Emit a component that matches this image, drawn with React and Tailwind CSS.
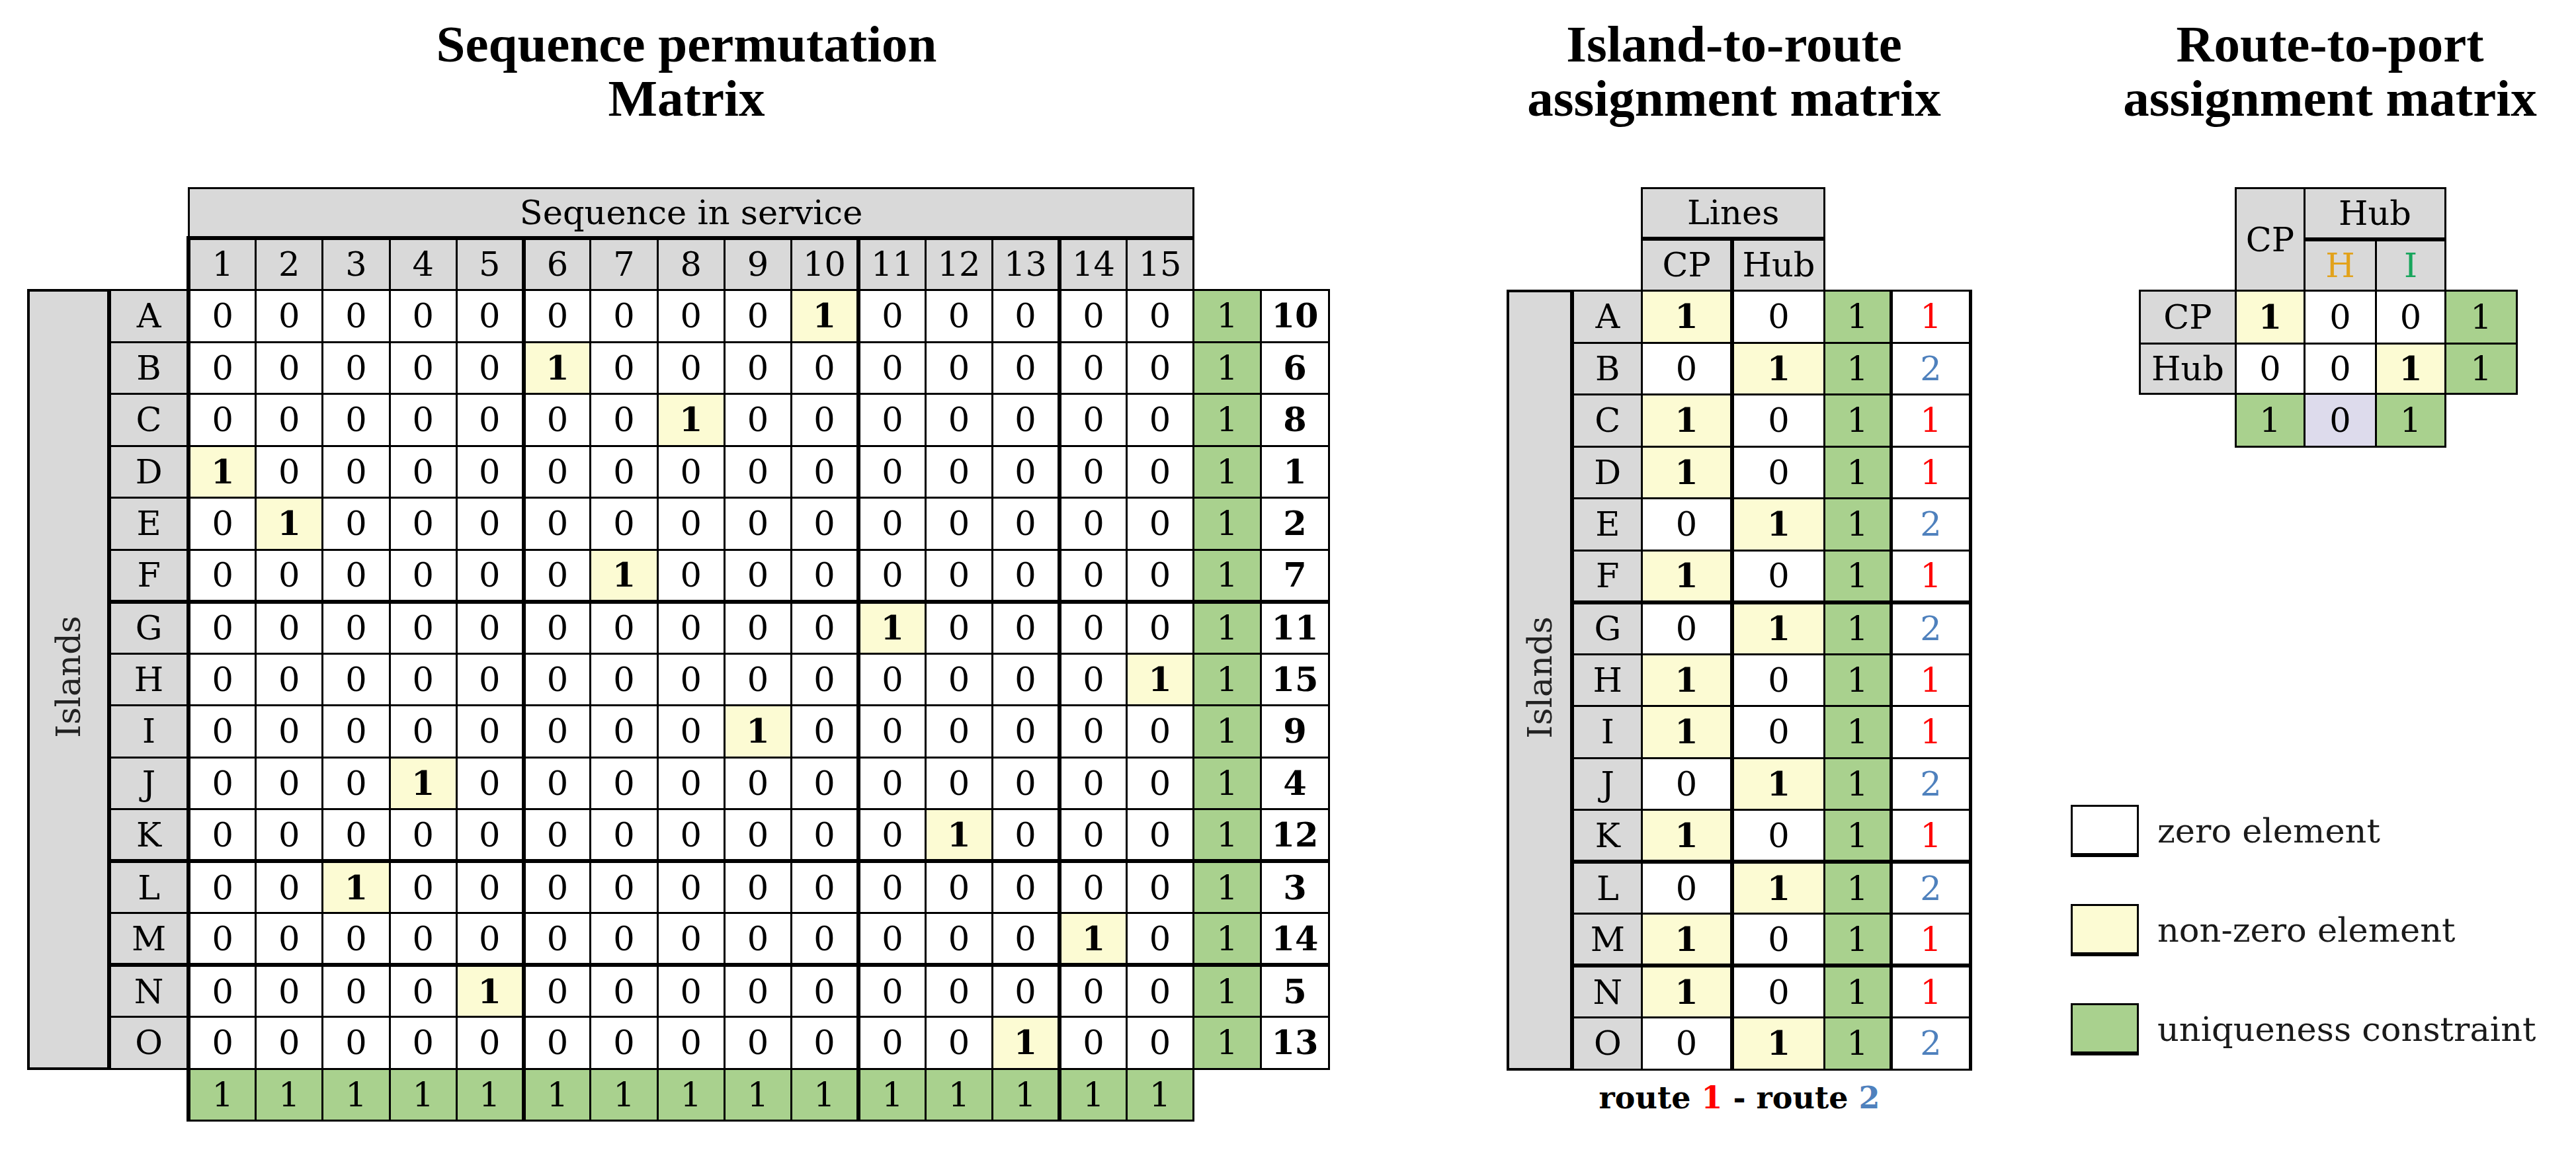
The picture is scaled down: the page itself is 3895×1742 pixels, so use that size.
import React from 'react';

// fonts: cells in a book serif, titles in a Times-width bold serif
const serif = "font-['DejaVu_Serif','Liberation_Serif',serif]";
const titleFont = "font-['Liberation_Serif','Times_New_Roman',serif]";

const LETTERS = 'ABCDEFGHIJKLMNO'.split('');
// column of the single 1 in each island row (also the right-hand number)
const SEQ = [10, 6, 8, 1, 2, 7, 11, 15, 9, 4, 12, 3, 14, 5, 13];
// island-to-route: 1 = CP line, 0 = Hub line
const CP_LINE = [1, 0, 1, 1, 0, 1, 0, 1, 1, 0, 1, 0, 1, 1, 0];
const COLS = Array.from({ length: 15 }, (_, i) => i + 1);
const THICK_COLS = [5, 10, 13];
const THICK_ROWS = [5, 10, 12];

const GRAY = 'bg-[#d9d9d9]';
const YELLOW = 'bg-[#fcfbd3]';
const GREEN = 'bg-[#a9d18e]';

function Title({ lines, className = '' }) {
  return (
    <div className={`${titleFont} text-[79px] leading-[82px] font-bold text-center whitespace-nowrap text-black ${className}`}>
      {lines.map(l => <div key={l}>{l}</div>)}
    </div>
  );
}

function Islands() {
  return (
    <span className="inline-block [writing-mode:vertical-rl] rotate-180 text-[#222]">Islands</span>
  );
}

function SeqMatrix() {
  const colEdge = c => `${c === 1 ? 'border-l-[6px]' : ''} ${THICK_COLS.includes(c) ? 'border-r-[6px]' : ''}`;
  return (
    <table className={`table-fixed border-collapse ${serif} text-[51px] leading-none text-black`}>
      <colgroup>
        <col className="w-[122px]" />
        <col className="w-[121px]" />
        {COLS.map(c => <col key={c} className="w-[101.5px]" />)}
        <col className="w-[102px]" />
        <col className="w-[103px]" />
      </colgroup>
      <tbody>
        <tr className="h-[75px]">
          <td colSpan={2} />
          <td colSpan={15} className={`border-[3px] border-b-[6px] border-black ${GRAY} text-center`}>Sequence in service</td>
          <td colSpan={2} />
        </tr>
        <tr className="h-[79px]">
          <td colSpan={2} />
          {COLS.map(c => (
            <td key={c} className={`border-[3px] border-black ${GRAY} text-center ${colEdge(c)}`}>{c}</td>
          ))}
          <td colSpan={2} />
        </tr>
        {LETTERS.map((L, r) => {
          const rb = THICK_ROWS.includes(r) ? 'border-b-[6px]' : '';
          return (
            <tr key={L} className="h-[78.5px]">
              {r === 0 && (
                <td rowSpan={15} className={`border-[4px] border-r-[6px] border-black ${GRAY} text-center`}>
                  <Islands />
                </td>
              )}
              <td className={`border-[3px] border-l-[6px] border-black ${GRAY} text-center ${rb}`}>{L}</td>
              {COLS.map(c => {
                const one = SEQ[r] === c;
                return (
                  <td key={c} className={`border-[3px] border-black text-center ${one ? `${YELLOW} font-bold` : 'bg-white'} ${colEdge(c)} ${rb}`}>
                    {one ? 1 : 0}
                  </td>
                );
              })}
              <td className={`border-[3px] border-black ${GREEN} text-center ${rb}`}>1</td>
              <td className={`border-[3px] border-black bg-white text-center font-bold ${rb}`}>{SEQ[r]}</td>
            </tr>
          );
        })}
        <tr className="h-[78px]">
          <td colSpan={2} />
          {COLS.map(c => (
            <td key={c} className={`border-[3px] border-black ${GREEN} text-center ${colEdge(c)}`}>1</td>
          ))}
          <td colSpan={2} />
        </tr>
      </tbody>
    </table>
  );
}

function RouteMatrix() {
  return (
    <table className={`table-fixed border-collapse ${serif} text-[51px] leading-none text-black`}>
      <colgroup>
        <col className="w-[98px]" />
        <col className="w-[106px]" />
        <col className="w-[137px]" />
        <col className="w-[140px]" />
        <col className="w-[102px]" />
        <col className="w-[121px]" />
      </colgroup>
      <tbody>
        <tr className="h-[76px]">
          <td colSpan={2} />
          <td colSpan={2} className={`border-[3px] border-b-[6px] border-black ${GRAY} text-center`}>Lines</td>
          <td colSpan={2} />
        </tr>
        <tr className="h-[79px]">
          <td colSpan={2} />
          <td className={`border-[3px] border-r-[6px] border-black ${GRAY} text-center`}>CP</td>
          <td className={`border-[3px] border-black ${GRAY} text-center`}>Hub</td>
          <td colSpan={2} />
        </tr>
        {LETTERS.map((L, r) => {
          const rb = THICK_ROWS.includes(r) ? 'border-b-[6px]' : '';
          const cp = CP_LINE[r] === 1;
          return (
            <tr key={L} className="h-[78.5px]">
              {r === 0 && (
                <td rowSpan={15} className={`border-[4px] border-r-[6px] border-black ${GRAY} text-center`}>
                  <Islands />
                </td>
              )}
              <td className={`border-[3px] border-black ${GRAY} text-center ${rb}`}>{L}</td>
              <td className={`border-[3px] border-r-[6px] border-black text-center ${cp ? `${YELLOW} font-bold` : 'bg-white'} ${rb}`}>{cp ? 1 : 0}</td>
              <td className={`border-[3px] border-black text-center ${cp ? 'bg-white' : `${YELLOW} font-bold`} ${rb}`}>{cp ? 0 : 1}</td>
              <td className={`border-[3px] border-r-[5px] border-black ${GREEN} text-center ${rb}`}>1</td>
              <td className={`border-[3px] border-r-[5px] border-black bg-white text-center ${rb} ${cp ? 'text-[#ff0000]' : 'text-[#4f81bd]'}`}>{cp ? 1 : 2}</td>
            </tr>
          );
        })}
      </tbody>
    </table>
  );
}

function PortMatrix() {
  return (
    <table className={`table-fixed border-collapse ${serif} text-[51px] leading-none text-black`}>
      <colgroup>
        <col className="w-[145px]" />
        <col className="w-[104px]" />
        <col className="w-[108px]" />
        <col className="w-[105px]" />
        <col className="w-[108px]" />
      </colgroup>
      <tbody>
        <tr className="h-[77px]">
          <td />
          <td rowSpan={2} className={`border-[3px] border-black ${GRAY} text-center`}>CP</td>
          <td colSpan={2} className={`border-[3px] border-b-[6px] border-black ${GRAY} text-center`}>Hub</td>
          <td />
        </tr>
        <tr className="h-[78px]">
          <td />
          <td className={`border-[3px] border-black ${GRAY} text-center text-[#e2a21b]`}>H</td>
          <td className={`border-[3px] border-black ${GRAY} text-center text-[#18a55c]`}>I</td>
          <td />
        </tr>
        <tr className="h-[80px]">
          <td className={`border-[3px] border-black ${GRAY} text-center`}>CP</td>
          <td className={`border-[3px] border-black ${YELLOW} text-center font-bold`}>1</td>
          <td className="border-[3px] border-black bg-white text-center">0</td>
          <td className="border-[3px] border-black bg-white text-center">0</td>
          <td className={`border-[3px] border-black ${GREEN} text-center`}>1</td>
        </tr>
        <tr className="h-[76px]">
          <td className={`border-[3px] border-black ${GRAY} text-center`}>Hub</td>
          <td className="border-[3px] border-black bg-white text-center">0</td>
          <td className="border-[3px] border-black bg-white text-center">0</td>
          <td className={`border-[3px] border-black ${YELLOW} text-center font-bold`}>1</td>
          <td className={`border-[3px] border-black ${GREEN} text-center`}>1</td>
        </tr>
        <tr className="h-[80px]">
          <td />
          <td className={`border-[3px] border-black ${GREEN} text-center`}>1</td>
          <td className="border-[3px] border-black bg-[#dddbec] text-center">0</td>
          <td className={`border-[3px] border-black ${GREEN} text-center`}>1</td>
          <td />
        </tr>
      </tbody>
    </table>
  );
}

function Legend() {
  const items = [
    { bg: 'bg-white', label: 'zero element' },
    { bg: YELLOW, label: 'non-zero element' },
    { bg: GREEN, label: 'uniqueness constraint' },
  ];
  return (
    <div className={`flex flex-col gap-[71px] ${serif} text-[51px] leading-none text-[#1a1a1a]`}>
      {items.map(it => (
        <div key={it.label} className="flex items-center">
          <div className={`w-[103px] h-[79px] border-[3px] border-b-[6px] border-black ${it.bg}`} />
          <span className="ml-[28px] whitespace-nowrap">{it.label}</span>
        </div>
      ))}
    </div>
  );
}

export default function App() {
  return (
    <div className="w-[3895px] h-[1742px] bg-white flex items-start pt-[26px] pl-[41px] overflow-hidden">
      {/* sequence permutation */}
      <div className="flex flex-col w-[1970px] shrink-0">
        <Title lines={['Sequence permutation', 'Matrix']} className="pl-[24px]" />
        <div className="mt-[93px]">
          <SeqMatrix />
        </div>
      </div>

      {/* island-to-route */}
      <div className="flex flex-col w-[704px] ml-[267px] shrink-0">
        <Title lines={['Island-to-route', 'assignment matrix']} className="pr-[16px]" />
        <div className="mt-[93px]">
          <RouteMatrix />
        </div>
        <div className={`mt-[18px] text-center ${serif} text-[46px] leading-none font-bold text-black whitespace-nowrap`}>
          route <span className="text-[#ff0000]">1</span> - route <span className="text-[#4f81bd]">2</span>
        </div>
      </div>

      {/* route-to-port + legend */}
      <div className="flex flex-col w-[731px] ml-[149px] shrink-0">
        <Title lines={['Route-to-port', 'assignment matrix']} className="pl-[53px]" />
        <div className="mt-[93px] ml-[103px]">
          <PortMatrix />
        </div>
        <div className="mt-[540px]">
          <Legend />
        </div>
      </div>
    </div>
  );
}
